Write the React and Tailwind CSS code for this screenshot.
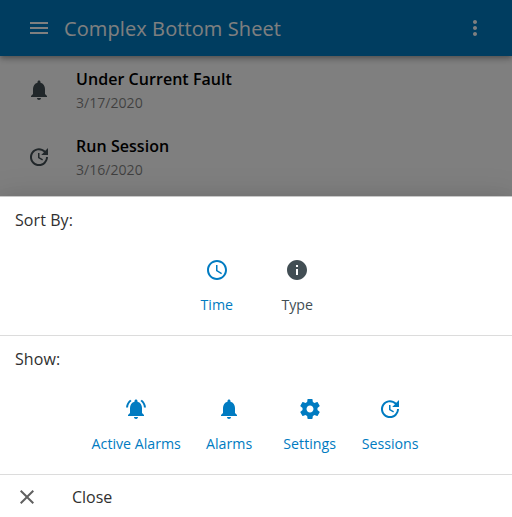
const ICONS = {
  menu: 'M3 18h18v-2H3v2zm0-5h18v-2H3v2zm0-7v2h18V6H3z',
  more: 'M12 8c1.1 0 2-.9 2-2s-.9-2-2-2-2 .9-2 2 .9 2 2 2zm0 2c-1.1 0-2 .9-2 2s.9 2 2 2 2-.9 2-2-.9-2-2-2zm0 6c-1.1 0-2 .9-2 2s.9 2 2 2 2-.9 2-2-.9-2-2-2z',
  bell: 'M12 22c1.1 0 2-.9 2-2h-4c0 1.1.89 2 2 2zm6-6v-5c0-3.07-1.64-5.64-4.5-6.32V4c0-.83-.67-1.5-1.5-1.5s-1.5.67-1.5 1.5v.68C7.63 5.36 6 7.92 6 11v5l-2 2v1h16v-1l-2-2z',
  bellActive:
    'M7.58 4.08L6.15 2.65C3.75 4.48 2.17 7.3 2.03 10.5h2c.15-2.65 1.51-4.97 3.55-6.42zm12.39 6.42h2c-.15-3.2-1.73-6.02-4.12-7.85l-1.42 1.43c2.02 1.45 3.39 3.77 3.54 6.42zM18 11c0-3.07-1.64-5.64-4.5-6.32V4c0-.83-.67-1.5-1.5-1.5s-1.5.67-1.5 1.5v.68C7.63 5.36 6 7.92 6 11v5l-2 2v1h16v-1l-2-2v-5zm-6 11c.14 0 .27-.01.4-.04.65-.14 1.18-.58 1.44-1.18.1-.24.15-.5.15-.78h-4c.01 1.1.9 2 2.01 2z',
  update:
    'M21 10.12h-6.78l2.74-2.82c-2.73-2.7-7.15-2.8-9.88-.1-2.73 2.71-2.73 7.08 0 9.79s7.15 2.71 9.88 0C18.32 15.65 19 14.08 19 12.1h2c0 1.98-.88 4.55-2.64 6.29-3.51 3.48-9.21 3.48-12.72 0-3.5-3.47-3.53-9.11-.02-12.58s9.14-3.47 12.65 0L21 3v7.12zM12.5 8v4.25l3.5 2.08-.72 1.21L11 13V8h1.5z',
  clock:
    'M11.99 2C6.47 2 2 6.48 2 12s4.47 10 9.99 10C17.52 22 22 17.52 22 12S17.52 2 11.99 2zM12 20c-4.42 0-8-3.58-8-8s3.58-8 8-8 8 3.58 8 8-3.58 8-8 8zM12.5 7H11v6l5.25 3.15.75-1.23-4.5-2.67z',
  info: 'M12 2C6.48 2 2 6.48 2 12s4.48 10 10 10 10-4.48 10-10S17.52 2 12 2zm1 15h-2v-6h2v6zm0-8h-2V7h2v2z',
  settings:
    'M19.43 12.98c.04-.32.07-.64.07-.98s-.03-.66-.07-.98l2.11-1.65c.19-.15.24-.42.12-.64l-2-3.46c-.12-.22-.39-.3-.61-.22l-2.49 1c-.52-.4-1.08-.73-1.69-.98l-.38-2.65C14.46 2.18 14.25 2 14 2h-4c-.25 0-.46.18-.49.42l-.38 2.65c-.61.25-1.17.59-1.69.98l-2.49-1c-.23-.09-.49 0-.61.22l-2 3.46c-.13.22-.07.49.12.64l2.11 1.65c-.04.32-.07.65-.07.98s.03.66.07.98l-2.11 1.65c-.19.15-.24.42-.12.64l2 3.46c.12.22.39.3.61.22l2.49-1c.52.4 1.08.73 1.69.98l.38 2.65c.03.24.24.42.49.42h4c.25 0 .46-.18.49-.42l.38-2.65c.61-.25 1.17-.59 1.69-.98l2.49 1c.23.09.49 0 .61-.22l2-3.46c.12-.22.07-.49-.12-.64l-2.11-1.65zM12 15.5c-1.93 0-3.5-1.57-3.5-3.5s1.57-3.5 3.5-3.5 3.5 1.57 3.5 3.5-1.57 3.5-3.5 3.5z',
  close:
    'M19 6.41L17.59 5 12 10.59 6.41 5 5 6.41 10.59 12 5 17.59 6.41 19 12 13.41 17.59 19 19 17.59 13.41 12z',
};

function Icon({ name, className = '' }) {
  return (
    <svg viewBox="0 0 24 24" className={`size-6 shrink-0 fill-current ${className}`}>
      <path d={ICONS[name]} />
    </svg>
  );
}

function EventRow({ icon, title, date }) {
  return (
    <li className="flex h-[67px] items-center pl-[27.4px]">
      <Icon name={icon} className="text-[#424e54]" />
      <div className="ml-[24.6px] pt-px">
        <p className="text-base leading-6 font-semibold tracking-[0.05px] text-black">{title}</p>
        <p className="pt-px text-[14.1px] leading-[22px] text-black/50">{date}</p>
      </div>
    </li>
  );
}

function Option({ icon, label, active }) {
  return (
    <button
      className={`flex min-w-[80.5px] flex-col items-center px-2 ${active ? 'text-[#007bc1]' : 'text-[#424e54]'}`}
    >
      <Icon name={icon} />
      <span className="mt-3 text-[14.2px] leading-[22px]">{label}</span>
    </button>
  );
}

function Section({ title, children }) {
  return (
    <section className="h-[139px] border-b border-[#dcdcdc]">
      <h2 className="pt-[11px] pl-[15px] text-base leading-6 tracking-[0.08px] text-[#303030]">{title}</h2>
      <div className="mt-[26px] flex justify-center pl-[2px]">{children}</div>
    </section>
  );
}

export default function App() {
  return (
    <div className="relative h-[517px] w-[512px] overflow-hidden bg-white font-['Open_Sans',sans-serif]">
      <header className="relative flex h-14 items-center bg-[#007bc1] pr-[25px] pl-[27.4px] text-white shadow-[0_2px_4px_-1px_rgba(0,0,0,0.2),0_4px_5px_rgba(0,0,0,0.14),0_1px_10px_rgba(0,0,0,0.12)]">
        <Icon name="menu" />
        <h1 className="ml-[12.6px] flex-1 pt-[2px] text-xl leading-8 tracking-[0.1px]">Complex Bottom Sheet</h1>
        <Icon name="more" />
      </header>
      <ul>
        <EventRow icon="bell" title="Under Current Fault" date="3/17/2020" />
        <EventRow icon="update" title="Run Session" date="3/16/2020" />
      </ul>

      <div className="absolute inset-0 flex flex-col justify-end bg-black/50">
        <div className="h-[321px] border-t border-[#c8c8c8] bg-white shadow-[0_8px_10px_-5px_rgba(0,0,0,0.2),0_16px_24px_2px_rgba(0,0,0,0.14),0_6px_30px_5px_rgba(0,0,0,0.12)]">
          <Section title="Sort By:">
            <Option icon="clock" label="Time" active />
            <Option icon="info" label="Type" />
          </Section>
          <Section title="Show:">
            <Option icon="bellActive" label="Active Alarms" active />
            <Option icon="bell" label="Alarms" active />
            <Option icon="settings" label="Settings" active />
            <Option icon="update" label="Sessions" active />
          </Section>
          <button className="flex h-[42px] w-full items-center pt-[2px] pl-[15.4px] text-base text-[#303030]">
            <Icon name="close" className="text-[#606060]" />
            <span className="ml-[32.6px]">Close</span>
          </button>
        </div>
      </div>
    </div>
  );
}
